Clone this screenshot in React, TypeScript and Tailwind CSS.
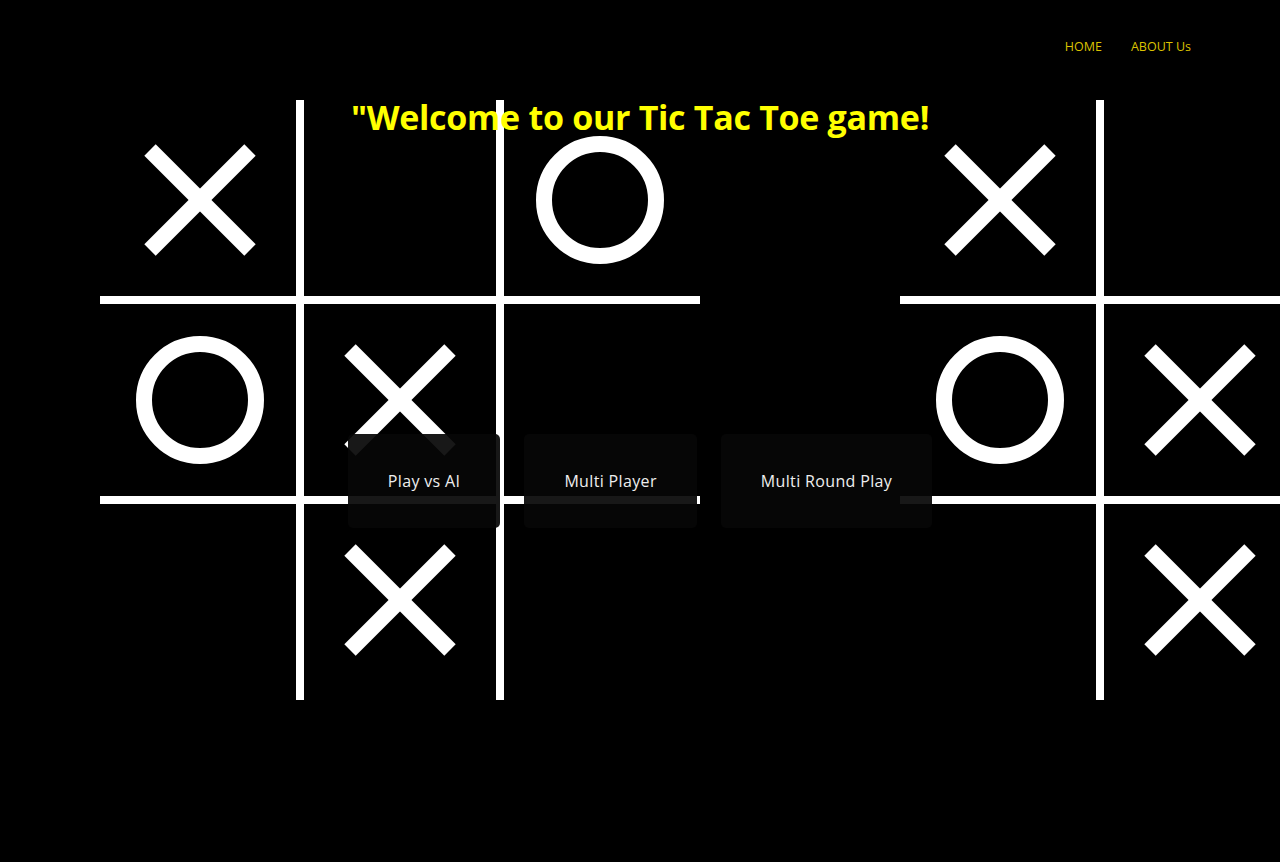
import React from 'react'

// cells of one board, row by row: x, o or empty
const board = ['x', '', 'o', 'o', 'x', '', '', 'x', '']

function BoardPattern() {
  return (
    <svg className="absolute inset-0 w-full h-full" aria-hidden="true">
      <defs>
        <pattern id="ttt" x="100" y="100" width="800" height="800" patternUnits="userSpaceOnUse">
          <rect x="196" y="0" width="8" height="600" fill="#fff" />
          <rect x="396" y="0" width="8" height="600" fill="#fff" />
          <rect x="0" y="196" width="600" height="8" fill="#fff" />
          <rect x="0" y="396" width="600" height="8" fill="#fff" />
          {board.map((cell, i) => {
            const cx = (i % 3) * 200 + 100
            const cy = Math.floor(i / 3) * 200 + 100
            if (cell === 'x') {
              return (
                <g key={i} stroke="#fff" strokeWidth="16">
                  <line x1={cx - 50} y1={cy - 50} x2={cx + 50} y2={cy + 50} />
                  <line x1={cx + 50} y1={cy - 50} x2={cx - 50} y2={cy + 50} />
                </g>
              )
            }
            if (cell === 'o') {
              return <circle key={i} cx={cx} cy={cy} r="56" fill="none" stroke="#fff" strokeWidth="16" />
            }
            return null
          })}
        </pattern>
      </defs>
      <rect width="100%" height="100%" fill="url(#ttt)" />
    </svg>
  )
}

export default function App() {
  const modes = ['Play vs AI', 'Multi Player', 'Multi Round Play']

  return (
    <div
      className="relative min-h-[862px] bg-black overflow-hidden"
      style={{ fontFamily: '"Open Sans", "Liberation Sans", sans-serif' }}
    >
      <BoardPattern />

      <div className="relative">
        {/* nav */}
        <nav className="flex justify-end items-center gap-[29px] pt-[38px] pr-[89px] text-[12.5px] text-[#dcc300]">
          <a href="#" className="leading-[18px]">HOME</a>
          <a href="#" className="leading-[18px]">ABOUT Us</a>
        </nav>

        <h1 className="mt-[41px] text-center text-[34px] leading-[40px] font-bold text-[#ffff00] tracking-[-0.3px]">
          "Welcome to our Tic Tac Toe game!
        </h1>

        <div className="mt-[297px] flex justify-center gap-6">
          {modes.map((m) => (
            <button
              key={m}
              className="px-10 py-[35px] rounded-[5px] bg-[#060606]/[0.93] text-[#eeeeee] text-base leading-6 tracking-[0.35px]"
            >
              {m}
            </button>
          ))}
        </div>
      </div>
    </div>
  )
}
